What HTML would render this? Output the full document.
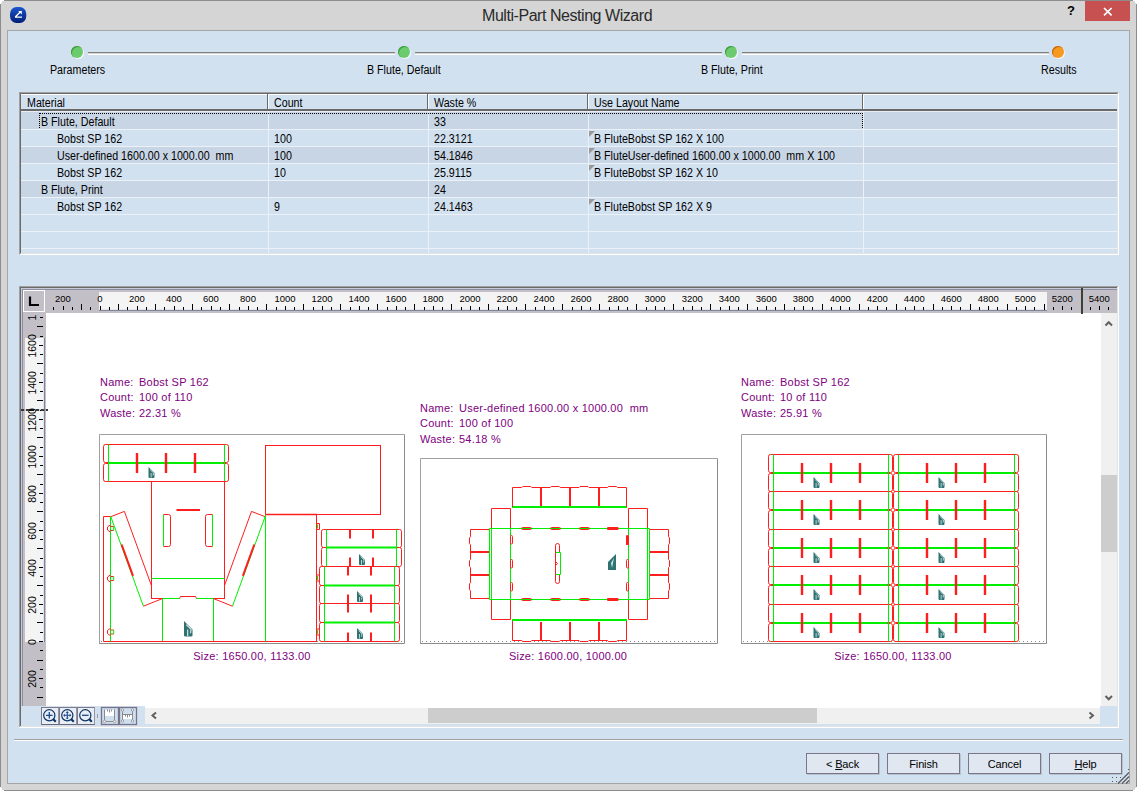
<!DOCTYPE html>
<html><head><meta charset="utf-8">
<style>
*{margin:0;padding:0;box-sizing:border-box}
html,body{width:1137px;height:791px;overflow:hidden;background:#d5d5d5;font-family:"Liberation Sans",sans-serif}
.a{position:absolute}
.t{position:absolute;white-space:pre;font-size:10.5px;line-height:12px;color:#000}
.tb{font-size:12px;transform:scaleX(.89);transform-origin:0 0}
#win{left:0;top:0;width:1137px;height:791px;border:1px solid #8c8c8c;background:#d5d5d5}
#content{left:7px;top:30px;width:1123px;height:754px;border:1px solid #a6a6a6;background:#d2e1f0}
.dot{position:absolute;width:12px;height:12px;border-radius:50%;background:#6ccb6c;box-shadow:1px 1px 0 #f4f8fc,inset 1px 1px 0 #3f9a3f}
.sl{position:absolute;height:3px;border-top:1px solid #808080;border-bottom:1px solid #fff;background:#d4d4d4;top:52px}
.btn{position:absolute;top:753px;width:73px;height:21px;border:1px solid #787688;background:#e1e7f1;box-shadow:1px 1px 0 #b9c3d0;font-size:11px;text-align:center;line-height:19px;padding-top:1px;letter-spacing:-0.15px}
</style></head><body>
<div id="win" class="a"></div>
<!-- title -->
<svg class="a" style="left:9px;top:6px" width="18" height="18" viewBox="0 0 18 18">
<defs><linearGradient id="ig" x1="0" y1="0" x2="0" y2="1"><stop offset="0" stop-color="#1d56cc"/><stop offset="1" stop-color="#001e78"/></linearGradient></defs>
<rect x="1" y="1" width="16.3" height="16" rx="6.5" ry="7" fill="url(#ig)"/>
<path d="M6.2,11 L11.5,5.8 M6,11.2 H13" stroke="#fff" stroke-width="1.3" fill="none"/>
<path d="M9.2,5 H12.8 V8.6Z" fill="#fff"/>
</svg>
<div class="t" style="left:482px;top:7px;font-size:16px;letter-spacing:-0.45px;line-height:18px;color:#2a2a2a">Multi-Part Nesting Wizard</div>
<div class="t" style="left:1067px;top:3px;font-size:13px;font-weight:bold;line-height:16px">?</div>
<div class="a" style="left:1085px;top:1px;width:45px;height:20px;background:#c75050"></div>
<svg class="a" style="left:1085px;top:1px" width="45" height="20"><path d="M19,7 L26.6,14.4 M26.6,7 L19,14.4" stroke="#fff" stroke-width="1.7"/></svg>

<div id="content" class="a"></div>

<!-- steps -->
<div class="sl" style="left:88px;width:307px"></div>
<div class="sl" style="left:415px;width:307px"></div>
<div class="sl" style="left:742px;width:307px"></div>
<div class="dot" style="left:71px;top:46px"></div>
<div class="dot" style="left:398px;top:46px"></div>
<div class="dot" style="left:725px;top:46px"></div>
<div class="dot" style="left:1052px;top:46px;background:#f7981f;box-shadow:1px 1px 0 #f4f8fc,inset 1px 1px 0 #c06a10"></div>
<div class="t tb" style="left:50px;top:64px">Parameters</div>
<div class="t tb" style="left:367px;top:64px">B Flute, Default</div>
<div class="t tb" style="left:701px;top:64px">B Flute, Print</div>
<div class="t tb" style="left:1041px;top:64px">Results</div>

<!-- TABLE -->
<div class="a" style="left:19px;top:92px;width:1100px;height:163px;background:#d2e1f0;border-top:1px solid #a0a0a0;border-left:1px solid #a0a0a0;border-right:1px solid #fff;border-bottom:1px solid #fff"></div>
<div class="a" style="left:20px;top:93px;width:1098px;height:161px;border-top:1px solid #696969;border-left:1px solid #696969;border-right:1px solid #e3e3e3;border-bottom:1px solid #e3e3e3"></div>
<div class="a" style="left:21px;top:94px;width:1096px;height:1px;background:#fff"></div>
<div class="a" style="left:21px;top:109px;width:1096px;height:2px;background:#696969"></div>
<div class="a" style="left:21px;top:111px;width:1096px;height:1px;background:#e8eef6"></div>
<div class="a" style="left:267px;top:94px;width:1px;height:15px;background:#696969"></div>
<div class="a" style="left:268px;top:95px;width:1px;height:14px;background:#fff"></div>
<div class="a" style="left:427px;top:94px;width:1px;height:15px;background:#696969"></div>
<div class="a" style="left:428px;top:95px;width:1px;height:14px;background:#fff"></div>
<div class="a" style="left:587px;top:94px;width:1px;height:15px;background:#696969"></div>
<div class="a" style="left:588px;top:95px;width:1px;height:14px;background:#fff"></div>
<div class="a" style="left:862px;top:94px;width:1px;height:15px;background:#696969"></div>
<div class="a" style="left:863px;top:95px;width:1px;height:14px;background:#fff"></div>
<div class="t tb" style="left:27px;top:97px">Material</div>
<div class="t tb" style="left:274px;top:97px">Count</div>
<div class="t tb" style="left:434px;top:97px">Waste %</div>
<div class="t tb" style="left:594px;top:97px">Use Layout Name</div>
<div class="a" style="left:21px;top:112px;width:1096px;height:17px;background:#c8d5e5"></div>
<div class="a" style="left:21px;top:129px;width:1096px;height:1px;background:#ecf1f7"></div>
<div class="a" style="left:21px;top:146px;width:1096px;height:1px;background:#ecf1f7"></div>
<div class="a" style="left:21px;top:147px;width:1096px;height:16px;background:#c8d5e5"></div>
<div class="a" style="left:21px;top:163px;width:1096px;height:1px;background:#ecf1f7"></div>
<div class="a" style="left:21px;top:180px;width:1096px;height:1px;background:#ecf1f7"></div>
<div class="a" style="left:21px;top:181px;width:1096px;height:16px;background:#c8d5e5"></div>
<div class="a" style="left:21px;top:197px;width:1096px;height:1px;background:#ecf1f7"></div>
<div class="a" style="left:21px;top:214px;width:1096px;height:1px;background:#ecf1f7"></div>
<div class="a" style="left:21px;top:231px;width:1096px;height:1px;background:#ecf1f7"></div>
<div class="a" style="left:21px;top:248px;width:1096px;height:1px;background:#ecf1f7"></div>
<div class="a" style="left:268px;top:111px;width:1px;height:142px;background:#ecf1f7"></div>
<div class="a" style="left:428px;top:111px;width:1px;height:142px;background:#ecf1f7"></div>
<div class="a" style="left:588px;top:111px;width:1px;height:142px;background:#ecf1f7"></div>
<div class="a" style="left:863px;top:111px;width:1px;height:142px;background:#ecf1f7"></div>
<div class="t tb" style="left:41px;top:116px">B Flute, Default</div>
<div class="t tb" style="left:434px;top:116px">33</div>
<div class="t tb" style="left:57px;top:133px">Bobst SP 162</div>
<div class="t tb" style="left:274px;top:133px">100</div>
<div class="t tb" style="left:434px;top:133px">22.3121</div>
<svg class="a" style="left:589px;top:131px" width="6" height="6"><path d="M0,0 L6,0 L0,6Z" fill="#999"/></svg>
<div class="t tb" style="left:594px;top:133px">B FluteBobst SP 162 X 100</div>
<div class="t tb" style="left:57px;top:150px">User-defined 1600.00 x 1000.00  mm</div>
<div class="t tb" style="left:274px;top:150px">100</div>
<div class="t tb" style="left:434px;top:150px">54.1846</div>
<svg class="a" style="left:589px;top:148px" width="6" height="6"><path d="M0,0 L6,0 L0,6Z" fill="#999"/></svg>
<div class="t tb" style="left:594px;top:150px">B FluteUser-defined 1600.00 x 1000.00  mm X 100</div>
<div class="t tb" style="left:57px;top:167px">Bobst SP 162</div>
<div class="t tb" style="left:274px;top:167px">10</div>
<div class="t tb" style="left:434px;top:167px">25.9115</div>
<svg class="a" style="left:589px;top:165px" width="6" height="6"><path d="M0,0 L6,0 L0,6Z" fill="#999"/></svg>
<div class="t tb" style="left:594px;top:167px">B FluteBobst SP 162 X 10</div>
<div class="t tb" style="left:41px;top:184px">B Flute, Print</div>
<div class="t tb" style="left:434px;top:184px">24</div>
<div class="t tb" style="left:57px;top:201px">Bobst SP 162</div>
<div class="t tb" style="left:274px;top:201px">9</div>
<div class="t tb" style="left:434px;top:201px">24.1463</div>
<svg class="a" style="left:589px;top:199px" width="6" height="6"><path d="M0,0 L6,0 L0,6Z" fill="#999"/></svg>
<div class="t tb" style="left:594px;top:201px">B FluteBobst SP 162 X 9</div>
<div class="a" style="left:39px;top:113px;width:824px;height:15px;border:1px dotted #000;border-bottom:none"></div>

<!-- CANVAS -->
<div class="a" style="left:19px;top:286px;width:1100px;height:442px;background:#d2e1f0;"></div>
<div class="a" style="left:19px;top:286px;width:1099px;height:1px;background:#a0a0a0;"></div>
<div class="a" style="left:19px;top:286px;width:1px;height:441px;background:#a0a0a0;"></div>
<div class="a" style="left:20px;top:287px;width:1097px;height:1px;background:#696969;"></div>
<div class="a" style="left:20px;top:287px;width:1px;height:439px;background:#696969;"></div>
<div class="a" style="left:1118px;top:286px;width:1px;height:442px;background:#fff;"></div>
<div class="a" style="left:19px;top:727px;width:1100px;height:1px;background:#fff;"></div>
<div class="a" style="left:1117px;top:287px;width:1px;height:440px;background:#e3e3e3;"></div>
<div class="a" style="left:20px;top:726px;width:1098px;height:1px;background:#e3e3e3;"></div>
<div class="a" style="left:21px;top:288px;width:1096px;height:1px;background:#c7cadb;"></div>
<div class="a" style="left:21px;top:289px;width:1096px;height:1px;background:#8e8ca0;"></div>
<div class="a" style="left:21px;top:288px;width:1px;height:418px;background:#c7cadb;"></div>
<div class="a" style="left:22px;top:289px;width:1px;height:417px;background:#8e8ca0;"></div>
<div class="a" style="left:23px;top:290px;width:1094px;height:23px;background:#c3bfc7;"></div>
<div class="a" style="left:23px;top:290px;width:23px;height:416px;background:#c3bfc7;"></div>
<div class="a" style="left:46px;top:313px;width:1055px;height:393px;background:#fff;"></div>
<svg class="a" style="left:0;top:0" width="1137" height="791"><path d="M99.5,643.5V434.5H404.5" stroke="#a0a0a0" fill="none"/>
<path d="M404.5,434.5V643.5H99" stroke="#8c8c8c" fill="none"/>
<line x1="101" y1="641.5" x2="404" y2="641.5" stroke="#8a8a8a" stroke-dasharray="1 3"/>
<rect x="103.5" y="444.5" width="125" height="18" rx="2" stroke="#ff1e1e" fill="none"/>
<rect x="103.5" y="463.5" width="125" height="18" rx="2" stroke="#ff1e1e" fill="none"/>
<line x1="108.5" y1="463" x2="223.5" y2="463" stroke="#00ee00" stroke-width="2"/>
<line x1="108.5" y1="444.5" x2="108.5" y2="481.5" stroke="#00ee00" stroke-width="1"/>
<line x1="224.5" y1="444.5" x2="224.5" y2="481.5" stroke="#00ee00" stroke-width="1"/>
<line x1="137" y1="453" x2="137" y2="473" stroke="#ff1e1e" stroke-width="2.4"/>
<line x1="166" y1="453" x2="166" y2="473" stroke="#ff1e1e" stroke-width="2.4"/>
<line x1="195" y1="453" x2="195" y2="473" stroke="#ff1e1e" stroke-width="2.4"/>
<polygon points="148.50,467.00 154.50,473.00 154.50,477.30 153.80,478.00 149.20,478.00 148.50,477.30" fill="#2e7272"/>
<path d="M150.10,469.60 L153.50,472.90 L153.10,475.60" stroke="#fff" stroke-width="0.80" fill="none" opacity=".85"/>
<rect x="150.70" y="473.00" width="0.80" height="4.60" fill="#fff" opacity=".85"/>
<line x1="151.5" y1="481" x2="151.5" y2="599" stroke="#ff1e1e" stroke-width="1"/>
<line x1="224.5" y1="481" x2="224.5" y2="599" stroke="#ff1e1e" stroke-width="1"/>
<line x1="151.5" y1="578.5" x2="224.5" y2="578.5" stroke="#00ee00" stroke-width="1"/>
<line x1="151" y1="598.5" x2="162.5" y2="598.5" stroke="#ff1e1e" stroke-width="1"/>
<line x1="213.5" y1="598.5" x2="225" y2="598.5" stroke="#ff1e1e" stroke-width="1"/>
<polyline points="162.5,598.5 179.5,598.5" stroke="#00ee00" stroke-width="1" fill="none"/>
<polyline points="196.5,598.5 213.5,598.5" stroke="#00ee00" stroke-width="1" fill="none"/>
<polyline points="179.5,598.5 180.5,596.5 195.5,596.5 196.5,598.5" stroke="#ff1e1e" stroke-width="1" fill="none"/>
<line x1="162.5" y1="598.5" x2="162.5" y2="641.5" stroke="#00ee00" stroke-width="1"/>
<line x1="213.5" y1="598.5" x2="213.5" y2="641.5" stroke="#00ee00" stroke-width="1"/>
<path d="M163.5,514.5 H168.5 Q170.5,514.5 170.5,516.5 V544.5 Q170.5,546.5 168.5,546.5 H163.5" stroke="#ff1e1e" fill="none"/>
<line x1="163.5" y1="514.5" x2="163.5" y2="546.5" stroke="#00ee00" stroke-width="1"/>
<path d="M212.5,514.5 H207.5 Q205.5,514.5 205.5,516.5 V544.5 Q205.5,546.5 207.5,546.5 H212.5" stroke="#ff1e1e" fill="none"/>
<line x1="212.5" y1="514.5" x2="212.5" y2="546.5" stroke="#00ee00" stroke-width="1"/>
<line x1="176.5" y1="510" x2="200" y2="510" stroke="#ff1e1e" stroke-width="2"/>
<polyline points="110.8,516.7 124.4,511.4 151.4,585.5" stroke="#ff1e1e" stroke-width="1" fill="none"/>
<line x1="110.8" y1="516.7" x2="143.4" y2="606.2" stroke="#00ee00" stroke-width="1"/>
<line x1="143.4" y1="606.2" x2="162.4" y2="598.6" stroke="#ff1e1e" stroke-width="1"/>
<line x1="121.6" y1="544.5" x2="133" y2="575.8" stroke="#ff1e1e" stroke-width="2"/>
<polyline points="265.1,516.7 251.5,511.4 224.5,585.5" stroke="#ff1e1e" stroke-width="1" fill="none"/>
<line x1="265.1" y1="516.7" x2="232.5" y2="606.2" stroke="#00ee00" stroke-width="1"/>
<line x1="232.5" y1="606.2" x2="213.5" y2="598.6" stroke="#ff1e1e" stroke-width="1"/>
<line x1="254.3" y1="544.5" x2="242.9" y2="575.8" stroke="#ff1e1e" stroke-width="2"/>
<polyline points="110.5,516.5 103.5,516.5 103.5,641.5 317,641.5" stroke="#ff1e1e" stroke-width="1" fill="none"/>
<line x1="110.5" y1="516.5" x2="110.5" y2="641.5" stroke="#00ee00" stroke-width="1"/>
<path d="M110.5,524.7 L107.5,527.0 V530.0 L110.5,532.3 M110.5,526.5 H113.7 M110.5,530.5 H113.7" stroke="#ff1e1e" fill="none"/>
<line x1="113.7" y1="526.5" x2="113.7" y2="530.5" stroke="#00ee00" stroke-width="1"/>
<path d="M110.5,574.7 L107.5,577.0 V580.0 L110.5,582.3 M110.5,576.5 H113.7 M110.5,580.5 H113.7" stroke="#ff1e1e" fill="none"/>
<line x1="113.7" y1="576.5" x2="113.7" y2="580.5" stroke="#00ee00" stroke-width="1"/>
<path d="M110.5,628.2 L107.5,630.5 V633.5 L110.5,635.8 M110.5,630 H113.7 M110.5,634 H113.7" stroke="#ff1e1e" fill="none"/>
<line x1="113.7" y1="630" x2="113.7" y2="634" stroke="#00ee00" stroke-width="1"/>
<rect x="265.5" y="445.5" width="115" height="69" stroke="#ff1e1e" fill="none"/>
<line x1="265.5" y1="514.5" x2="317" y2="514.5" stroke="#ff1e1e" stroke-width="1.5"/>
<line x1="265.5" y1="514.5" x2="265.5" y2="641.5" stroke="#00ee00" stroke-width="1"/>
<line x1="316.5" y1="514.5" x2="316.5" y2="641.5" stroke="#ff1e1e" stroke-width="1"/>
<path d="M316.5,523.5 H319.5 V529.5 H316.5" stroke="#ff1e1e" fill="none"/>
<line x1="317.5" y1="524.5" x2="317.5" y2="528.5" stroke="#00ee00" stroke-width="1"/>
<path d="M316.5,575 H319.5 V581 H316.5" stroke="#ff1e1e" fill="none"/>
<line x1="317.5" y1="576" x2="317.5" y2="580" stroke="#00ee00" stroke-width="1"/>
<path d="M316.5,629 H319.5 V635 H316.5" stroke="#ff1e1e" fill="none"/>
<line x1="317.5" y1="630" x2="317.5" y2="634" stroke="#00ee00" stroke-width="1"/>
<rect x="321.5" y="529.5" width="80.0" height="18.0" rx="2" stroke="#ff1e1e" fill="none"/>
<rect x="321.5" y="547.5" width="80.0" height="19.0" rx="2" stroke="#ff1e1e" fill="none"/>
<line x1="326.5" y1="547.5" x2="396.5" y2="547.5" stroke="#00ee00" stroke-width="2"/>
<line x1="326.5" y1="529.5" x2="326.5" y2="566.5" stroke="#00ee00" stroke-width="1"/>
<line x1="396.5" y1="529.5" x2="396.5" y2="566.5" stroke="#00ee00" stroke-width="1"/>
<line x1="350" y1="529.5" x2="350" y2="538.5" stroke="#ff1e1e" stroke-width="2"/>
<line x1="350" y1="557.5" x2="350" y2="566.5" stroke="#ff1e1e" stroke-width="2"/>
<line x1="373" y1="529.5" x2="373" y2="538.5" stroke="#ff1e1e" stroke-width="2"/>
<line x1="373" y1="557.5" x2="373" y2="566.5" stroke="#ff1e1e" stroke-width="2"/>
<polygon points="359.00,554.00 365.00,560.00 365.00,564.30 364.30,565.00 359.70,565.00 359.00,564.30" fill="#2e7272"/>
<path d="M360.60,556.60 L364.00,559.90 L363.60,562.60" stroke="#fff" stroke-width="0.80" fill="none" opacity=".85"/>
<rect x="361.20" y="560.00" width="0.80" height="4.60" fill="#fff" opacity=".85"/>
<rect x="319.5" y="566.5" width="80.0" height="19.0" rx="2" stroke="#ff1e1e" fill="none"/>
<rect x="319.5" y="585.5" width="80.0" height="18.0" rx="2" stroke="#ff1e1e" fill="none"/>
<line x1="324.5" y1="585.5" x2="394.5" y2="585.5" stroke="#00ee00" stroke-width="2"/>
<line x1="324.5" y1="566.5" x2="324.5" y2="603.5" stroke="#00ee00" stroke-width="1"/>
<line x1="394.5" y1="566.5" x2="394.5" y2="603.5" stroke="#00ee00" stroke-width="1"/>
<line x1="348" y1="566.5" x2="348" y2="575.5" stroke="#ff1e1e" stroke-width="2"/>
<line x1="348" y1="594.5" x2="348" y2="603.5" stroke="#ff1e1e" stroke-width="2"/>
<line x1="371" y1="566.5" x2="371" y2="575.5" stroke="#ff1e1e" stroke-width="2"/>
<line x1="371" y1="594.5" x2="371" y2="603.5" stroke="#ff1e1e" stroke-width="2"/>
<polygon points="357.00,591.00 363.00,597.00 363.00,601.30 362.30,602.00 357.70,602.00 357.00,601.30" fill="#2e7272"/>
<path d="M358.60,593.60 L362.00,596.90 L361.60,599.60" stroke="#fff" stroke-width="0.80" fill="none" opacity=".85"/>
<rect x="359.20" y="597.00" width="0.80" height="4.60" fill="#fff" opacity=".85"/>
<rect x="319.5" y="603.5" width="80.0" height="19.0" rx="2" stroke="#ff1e1e" fill="none"/>
<rect x="319.5" y="622.5" width="80.0" height="19.0" rx="2" stroke="#ff1e1e" fill="none"/>
<line x1="324.5" y1="622.5" x2="394.5" y2="622.5" stroke="#00ee00" stroke-width="2"/>
<line x1="324.5" y1="603.5" x2="324.5" y2="641.5" stroke="#00ee00" stroke-width="1"/>
<line x1="394.5" y1="603.5" x2="394.5" y2="641.5" stroke="#00ee00" stroke-width="1"/>
<line x1="348" y1="603.5" x2="348" y2="612.5" stroke="#ff1e1e" stroke-width="2"/>
<line x1="348" y1="632.5" x2="348" y2="641.5" stroke="#ff1e1e" stroke-width="2"/>
<line x1="371" y1="603.5" x2="371" y2="612.5" stroke="#ff1e1e" stroke-width="2"/>
<line x1="371" y1="632.5" x2="371" y2="641.5" stroke="#ff1e1e" stroke-width="2"/>
<polygon points="357.00,628.00 363.00,634.00 363.00,638.30 362.30,639.00 357.70,639.00 357.00,638.30" fill="#2e7272"/>
<path d="M358.60,630.60 L362.00,633.90 L361.60,636.60" stroke="#fff" stroke-width="0.80" fill="none" opacity=".85"/>
<rect x="359.20" y="634.00" width="0.80" height="4.60" fill="#fff" opacity=".85"/>
<polygon points="184.00,621.00 192.52,629.52 192.52,635.63 191.53,636.62 184.99,636.62 184.00,635.63" fill="#2e7272"/>
<path d="M186.27,624.69 L191.10,629.38 L190.53,633.21" stroke="#fff" stroke-width="1.14" fill="none" opacity=".85"/>
<rect x="187.12" y="629.52" width="1.14" height="6.53" fill="#fff" opacity=".85"/>
<path d="M420.5,643.5V458.5H717.5" stroke="#a0a0a0" fill="none"/>
<path d="M717.5,458.5V643.5H420" stroke="#8c8c8c" fill="none"/>
<line x1="422" y1="641.5" x2="717" y2="641.5" stroke="#8a8a8a" stroke-dasharray="1 3"/>
<path d="M489.5,528.5 H649.5 M489.5,599.5 H649.5" stroke="#00ee00" stroke-width="1" fill="none"/>
<path d="M489.5,528.5 V599.5 M491.5,528.5 V599.5 M510.5,528.5 V599.5 M628.5,528.5 V599.5 M647.5,528.5 V599.5 M649.5,528.5 V599.5" stroke="#00ee00" stroke-width="1" fill="none"/>
<path d="M510.5,528 V508.5 H491.5 V528" stroke="#ff1e1e" stroke-width="1" fill="none"/>
<path d="M628.5,528 V508.5 H647.5 V528" stroke="#ff1e1e" stroke-width="1" fill="none"/>
<path d="M510.5,600 V619.5 H491.5 V600" stroke="#ff1e1e" stroke-width="1" fill="none"/>
<path d="M628.5,600 V619.5 H647.5 V600" stroke="#ff1e1e" stroke-width="1" fill="none"/>
<line x1="512" y1="507" x2="627" y2="507" stroke="#00ee00" stroke-width="2"/>
<line x1="512" y1="620" x2="627" y2="620" stroke="#00ee00" stroke-width="2"/>
<path d="M512.5,507 V487.5 H521.75 L522.75,486.5 H530.75 L531.75,487.5 H550.25 L551.25,486.5 H559.25 L560.25,487.5 H579.0 L580.0,486.5 H588.0 L589.0,487.5 H607.5 L608.5,486.5 H616.5 L617.5,487.5 H626.5 V507" stroke="#ff1e1e" stroke-width="1" fill="none"/>
<path d="M512.5,621 V640.5 H521.75 L522.75,641.5 H530.75 L531.75,640.5 H550.25 L551.25,641.5 H559.25 L560.25,640.5 H579.0 L580.0,641.5 H588.0 L589.0,640.5 H607.5 L608.5,641.5 H616.5 L617.5,640.5 H626.5 V621" stroke="#ff1e1e" stroke-width="1" fill="none"/>
<line x1="541" y1="488" x2="541" y2="506" stroke="#ff1e1e" stroke-width="2"/>
<line x1="541" y1="622" x2="541" y2="640" stroke="#ff1e1e" stroke-width="2"/>
<line x1="570" y1="488" x2="570" y2="506" stroke="#ff1e1e" stroke-width="2"/>
<line x1="570" y1="622" x2="570" y2="640" stroke="#ff1e1e" stroke-width="2"/>
<line x1="599" y1="488" x2="599" y2="506" stroke="#ff1e1e" stroke-width="2"/>
<line x1="599" y1="622" x2="599" y2="640" stroke="#ff1e1e" stroke-width="2"/>
<path d="M489,529.5 H470.5 V536.75 L469.5,537.75 V543.75 L470.5,544.75 V559.5 L469.5,560.5 V566.5 L470.5,567.5 V582.75 L469.5,583.75 V589.75 L470.5,590.75 V598.5 H489" stroke="#ff1e1e" stroke-width="1" fill="none"/>
<path d="M650,529.5 H668.5 V536.75 L669.5,537.75 V543.75 L668.5,544.75 V559.5 L669.5,560.5 V566.5 L668.5,567.5 V582.75 L669.5,583.75 V589.75 L668.5,590.75 V598.5 H650" stroke="#ff1e1e" stroke-width="1" fill="none"/>
<line x1="471" y1="552" x2="489" y2="552" stroke="#ff1e1e" stroke-width="2"/>
<line x1="650" y1="552" x2="668" y2="552" stroke="#ff1e1e" stroke-width="2"/>
<line x1="471" y1="575" x2="489" y2="575" stroke="#ff1e1e" stroke-width="2"/>
<line x1="650" y1="575" x2="668" y2="575" stroke="#ff1e1e" stroke-width="2"/>
<rect x="521.5" y="527.5" width="10" height="2" rx="1" stroke="#ff1e1e" fill="none" stroke-width="1"/>
<rect x="521.5" y="598.5" width="10" height="2" rx="1" stroke="#ff1e1e" fill="none" stroke-width="1"/>
<rect x="550.5" y="527.5" width="10" height="2" rx="1" stroke="#ff1e1e" fill="none" stroke-width="1"/>
<rect x="550.5" y="598.5" width="10" height="2" rx="1" stroke="#ff1e1e" fill="none" stroke-width="1"/>
<rect x="579.5" y="527.5" width="10" height="2" rx="1" stroke="#ff1e1e" fill="none" stroke-width="1"/>
<rect x="579.5" y="598.5" width="10" height="2" rx="1" stroke="#ff1e1e" fill="none" stroke-width="1"/>
<rect x="607" y="527" width="11.5" height="3" rx="1" fill="#ff1e1e"/>
<rect x="607" y="598" width="11.5" height="3" rx="1" fill="#ff1e1e"/>
<rect x="510.5" y="535.5" width="2" height="8.5" rx="1" stroke="#ff1e1e" fill="none"/>
<rect x="626.5" y="535.5" width="2" height="8.5" rx="1" stroke="#ff1e1e" fill="none"/>
<rect x="510.5" y="559.5" width="2" height="8.5" rx="1" stroke="#ff1e1e" fill="none"/>
<rect x="626.5" y="559.5" width="2" height="8.5" rx="1" stroke="#ff1e1e" fill="none"/>
<rect x="510.5" y="582.5" width="2" height="8.5" rx="1" stroke="#ff1e1e" fill="none"/>
<rect x="626.5" y="582.5" width="2" height="8.5" rx="1" stroke="#ff1e1e" fill="none"/>
<rect x="626" y="535.5" width="3" height="9.5" fill="#ff1e1e"/>
<rect x="555.5" y="543.5" width="4" height="40" rx="2" stroke="#ff1e1e" fill="none"/>
<rect x="558.8" y="553" width="2" height="21" fill="#fff"/>
<path d="M556,552.5 H560.5 V574.5 H556" stroke="#00ee00" fill="none"/>
<path d="M555.5,561.5 L557.5,563.5 L555.5,565.5" stroke="#ff1e1e" fill="none"/>
<polygon points="616,554 616,570 608,570 608,562" fill="#2e7272"/>
<polygon points="614,558 611,563 612,568" fill="#fff" opacity=".8"/>
<path d="M741.5,643.5V434.5H1046.5" stroke="#a0a0a0" fill="none"/>
<path d="M1046.5,434.5V643.5H741" stroke="#8c8c8c" fill="none"/>
<line x1="743" y1="641.5" x2="1046" y2="641.5" stroke="#8a8a8a" stroke-dasharray="1 3"/>
<rect x="768.5" y="454.5" width="124" height="18" rx="2" stroke="#ff1e1e" fill="none"/>
<rect x="768.5" y="473.5" width="124" height="18" rx="2" stroke="#ff1e1e" fill="none"/>
<line x1="773.5" y1="473" x2="887.5" y2="473" stroke="#00ee00" stroke-width="2"/>
<line x1="773.5" y1="454.5" x2="773.5" y2="491.5" stroke="#00ee00" stroke-width="1"/>
<line x1="888.5" y1="454.5" x2="888.5" y2="491.5" stroke="#00ee00" stroke-width="1"/>
<line x1="802" y1="463" x2="802" y2="483" stroke="#ff1e1e" stroke-width="2.4"/>
<line x1="831" y1="463" x2="831" y2="483" stroke="#ff1e1e" stroke-width="2.4"/>
<line x1="860" y1="463" x2="860" y2="483" stroke="#ff1e1e" stroke-width="2.4"/>
<polygon points="813.50,477.00 819.50,483.00 819.50,487.30 818.80,488.00 814.20,488.00 813.50,487.30" fill="#2e7272"/>
<path d="M815.10,479.60 L818.50,482.90 L818.10,485.60" stroke="#fff" stroke-width="0.80" fill="none" opacity=".85"/>
<rect x="815.70" y="483.00" width="0.80" height="4.60" fill="#fff" opacity=".85"/>
<rect x="893.5" y="454.5" width="125" height="18" rx="2" stroke="#ff1e1e" fill="none"/>
<rect x="893.5" y="473.5" width="125" height="18" rx="2" stroke="#ff1e1e" fill="none"/>
<line x1="898.5" y1="473" x2="1013.5" y2="473" stroke="#00ee00" stroke-width="2"/>
<line x1="898.5" y1="454.5" x2="898.5" y2="491.5" stroke="#00ee00" stroke-width="1"/>
<line x1="1014.5" y1="454.5" x2="1014.5" y2="491.5" stroke="#00ee00" stroke-width="1"/>
<line x1="927" y1="463" x2="927" y2="483" stroke="#ff1e1e" stroke-width="2.4"/>
<line x1="956" y1="463" x2="956" y2="483" stroke="#ff1e1e" stroke-width="2.4"/>
<line x1="985" y1="463" x2="985" y2="483" stroke="#ff1e1e" stroke-width="2.4"/>
<polygon points="938.50,477.00 944.50,483.00 944.50,487.30 943.80,488.00 939.20,488.00 938.50,487.30" fill="#2e7272"/>
<path d="M940.10,479.60 L943.50,482.90 L943.10,485.60" stroke="#fff" stroke-width="0.80" fill="none" opacity=".85"/>
<rect x="940.70" y="483.00" width="0.80" height="4.60" fill="#fff" opacity=".85"/>
<rect x="768.5" y="491.5" width="124" height="18" rx="2" stroke="#ff1e1e" fill="none"/>
<rect x="768.5" y="510.5" width="124" height="19" rx="2" stroke="#ff1e1e" fill="none"/>
<line x1="773.5" y1="510" x2="887.5" y2="510" stroke="#00ee00" stroke-width="2"/>
<line x1="773.5" y1="491.5" x2="773.5" y2="529.5" stroke="#00ee00" stroke-width="1"/>
<line x1="888.5" y1="491.5" x2="888.5" y2="529.5" stroke="#00ee00" stroke-width="1"/>
<line x1="802" y1="500" x2="802" y2="520" stroke="#ff1e1e" stroke-width="2.4"/>
<line x1="831" y1="500" x2="831" y2="520" stroke="#ff1e1e" stroke-width="2.4"/>
<line x1="860" y1="500" x2="860" y2="520" stroke="#ff1e1e" stroke-width="2.4"/>
<polygon points="813.50,514.00 819.50,520.00 819.50,524.30 818.80,525.00 814.20,525.00 813.50,524.30" fill="#2e7272"/>
<path d="M815.10,516.60 L818.50,519.90 L818.10,522.60" stroke="#fff" stroke-width="0.80" fill="none" opacity=".85"/>
<rect x="815.70" y="520.00" width="0.80" height="4.60" fill="#fff" opacity=".85"/>
<rect x="893.5" y="491.5" width="125" height="18" rx="2" stroke="#ff1e1e" fill="none"/>
<rect x="893.5" y="510.5" width="125" height="19" rx="2" stroke="#ff1e1e" fill="none"/>
<line x1="898.5" y1="510" x2="1013.5" y2="510" stroke="#00ee00" stroke-width="2"/>
<line x1="898.5" y1="491.5" x2="898.5" y2="529.5" stroke="#00ee00" stroke-width="1"/>
<line x1="1014.5" y1="491.5" x2="1014.5" y2="529.5" stroke="#00ee00" stroke-width="1"/>
<line x1="927" y1="500" x2="927" y2="520" stroke="#ff1e1e" stroke-width="2.4"/>
<line x1="956" y1="500" x2="956" y2="520" stroke="#ff1e1e" stroke-width="2.4"/>
<line x1="985" y1="500" x2="985" y2="520" stroke="#ff1e1e" stroke-width="2.4"/>
<polygon points="938.50,514.00 944.50,520.00 944.50,524.30 943.80,525.00 939.20,525.00 938.50,524.30" fill="#2e7272"/>
<path d="M940.10,516.60 L943.50,519.90 L943.10,522.60" stroke="#fff" stroke-width="0.80" fill="none" opacity=".85"/>
<rect x="940.70" y="520.00" width="0.80" height="4.60" fill="#fff" opacity=".85"/>
<rect x="768.5" y="529.5" width="124" height="18" rx="2" stroke="#ff1e1e" fill="none"/>
<rect x="768.5" y="548.5" width="124" height="18" rx="2" stroke="#ff1e1e" fill="none"/>
<line x1="773.5" y1="548" x2="887.5" y2="548" stroke="#00ee00" stroke-width="2"/>
<line x1="773.5" y1="529.5" x2="773.5" y2="566.5" stroke="#00ee00" stroke-width="1"/>
<line x1="888.5" y1="529.5" x2="888.5" y2="566.5" stroke="#00ee00" stroke-width="1"/>
<line x1="802" y1="538" x2="802" y2="558" stroke="#ff1e1e" stroke-width="2.4"/>
<line x1="831" y1="538" x2="831" y2="558" stroke="#ff1e1e" stroke-width="2.4"/>
<line x1="860" y1="538" x2="860" y2="558" stroke="#ff1e1e" stroke-width="2.4"/>
<polygon points="813.50,552.00 819.50,558.00 819.50,562.30 818.80,563.00 814.20,563.00 813.50,562.30" fill="#2e7272"/>
<path d="M815.10,554.60 L818.50,557.90 L818.10,560.60" stroke="#fff" stroke-width="0.80" fill="none" opacity=".85"/>
<rect x="815.70" y="558.00" width="0.80" height="4.60" fill="#fff" opacity=".85"/>
<rect x="893.5" y="529.5" width="125" height="18" rx="2" stroke="#ff1e1e" fill="none"/>
<rect x="893.5" y="548.5" width="125" height="18" rx="2" stroke="#ff1e1e" fill="none"/>
<line x1="898.5" y1="548" x2="1013.5" y2="548" stroke="#00ee00" stroke-width="2"/>
<line x1="898.5" y1="529.5" x2="898.5" y2="566.5" stroke="#00ee00" stroke-width="1"/>
<line x1="1014.5" y1="529.5" x2="1014.5" y2="566.5" stroke="#00ee00" stroke-width="1"/>
<line x1="927" y1="538" x2="927" y2="558" stroke="#ff1e1e" stroke-width="2.4"/>
<line x1="956" y1="538" x2="956" y2="558" stroke="#ff1e1e" stroke-width="2.4"/>
<line x1="985" y1="538" x2="985" y2="558" stroke="#ff1e1e" stroke-width="2.4"/>
<polygon points="938.50,552.00 944.50,558.00 944.50,562.30 943.80,563.00 939.20,563.00 938.50,562.30" fill="#2e7272"/>
<path d="M940.10,554.60 L943.50,557.90 L943.10,560.60" stroke="#fff" stroke-width="0.80" fill="none" opacity=".85"/>
<rect x="940.70" y="558.00" width="0.80" height="4.60" fill="#fff" opacity=".85"/>
<rect x="768.5" y="566.5" width="124" height="18" rx="2" stroke="#ff1e1e" fill="none"/>
<rect x="768.5" y="585.5" width="124" height="19" rx="2" stroke="#ff1e1e" fill="none"/>
<line x1="773.5" y1="585" x2="887.5" y2="585" stroke="#00ee00" stroke-width="2"/>
<line x1="773.5" y1="566.5" x2="773.5" y2="604.5" stroke="#00ee00" stroke-width="1"/>
<line x1="888.5" y1="566.5" x2="888.5" y2="604.5" stroke="#00ee00" stroke-width="1"/>
<line x1="802" y1="575" x2="802" y2="595" stroke="#ff1e1e" stroke-width="2.4"/>
<line x1="831" y1="575" x2="831" y2="595" stroke="#ff1e1e" stroke-width="2.4"/>
<line x1="860" y1="575" x2="860" y2="595" stroke="#ff1e1e" stroke-width="2.4"/>
<polygon points="813.50,589.00 819.50,595.00 819.50,599.30 818.80,600.00 814.20,600.00 813.50,599.30" fill="#2e7272"/>
<path d="M815.10,591.60 L818.50,594.90 L818.10,597.60" stroke="#fff" stroke-width="0.80" fill="none" opacity=".85"/>
<rect x="815.70" y="595.00" width="0.80" height="4.60" fill="#fff" opacity=".85"/>
<rect x="893.5" y="566.5" width="125" height="18" rx="2" stroke="#ff1e1e" fill="none"/>
<rect x="893.5" y="585.5" width="125" height="19" rx="2" stroke="#ff1e1e" fill="none"/>
<line x1="898.5" y1="585" x2="1013.5" y2="585" stroke="#00ee00" stroke-width="2"/>
<line x1="898.5" y1="566.5" x2="898.5" y2="604.5" stroke="#00ee00" stroke-width="1"/>
<line x1="1014.5" y1="566.5" x2="1014.5" y2="604.5" stroke="#00ee00" stroke-width="1"/>
<line x1="927" y1="575" x2="927" y2="595" stroke="#ff1e1e" stroke-width="2.4"/>
<line x1="956" y1="575" x2="956" y2="595" stroke="#ff1e1e" stroke-width="2.4"/>
<line x1="985" y1="575" x2="985" y2="595" stroke="#ff1e1e" stroke-width="2.4"/>
<polygon points="938.50,589.00 944.50,595.00 944.50,599.30 943.80,600.00 939.20,600.00 938.50,599.30" fill="#2e7272"/>
<path d="M940.10,591.60 L943.50,594.90 L943.10,597.60" stroke="#fff" stroke-width="0.80" fill="none" opacity=".85"/>
<rect x="940.70" y="595.00" width="0.80" height="4.60" fill="#fff" opacity=".85"/>
<rect x="768.5" y="604.5" width="124" height="18" rx="2" stroke="#ff1e1e" fill="none"/>
<rect x="768.5" y="623.5" width="124" height="18" rx="2" stroke="#ff1e1e" fill="none"/>
<line x1="773.5" y1="623" x2="887.5" y2="623" stroke="#00ee00" stroke-width="2"/>
<line x1="773.5" y1="604.5" x2="773.5" y2="641.5" stroke="#00ee00" stroke-width="1"/>
<line x1="888.5" y1="604.5" x2="888.5" y2="641.5" stroke="#00ee00" stroke-width="1"/>
<line x1="802" y1="613" x2="802" y2="633" stroke="#ff1e1e" stroke-width="2.4"/>
<line x1="831" y1="613" x2="831" y2="633" stroke="#ff1e1e" stroke-width="2.4"/>
<line x1="860" y1="613" x2="860" y2="633" stroke="#ff1e1e" stroke-width="2.4"/>
<polygon points="813.50,627.00 819.50,633.00 819.50,637.30 818.80,638.00 814.20,638.00 813.50,637.30" fill="#2e7272"/>
<path d="M815.10,629.60 L818.50,632.90 L818.10,635.60" stroke="#fff" stroke-width="0.80" fill="none" opacity=".85"/>
<rect x="815.70" y="633.00" width="0.80" height="4.60" fill="#fff" opacity=".85"/>
<rect x="893.5" y="604.5" width="125" height="18" rx="2" stroke="#ff1e1e" fill="none"/>
<rect x="893.5" y="623.5" width="125" height="18" rx="2" stroke="#ff1e1e" fill="none"/>
<line x1="898.5" y1="623" x2="1013.5" y2="623" stroke="#00ee00" stroke-width="2"/>
<line x1="898.5" y1="604.5" x2="898.5" y2="641.5" stroke="#00ee00" stroke-width="1"/>
<line x1="1014.5" y1="604.5" x2="1014.5" y2="641.5" stroke="#00ee00" stroke-width="1"/>
<line x1="927" y1="613" x2="927" y2="633" stroke="#ff1e1e" stroke-width="2.4"/>
<line x1="956" y1="613" x2="956" y2="633" stroke="#ff1e1e" stroke-width="2.4"/>
<line x1="985" y1="613" x2="985" y2="633" stroke="#ff1e1e" stroke-width="2.4"/>
<polygon points="938.50,627.00 944.50,633.00 944.50,637.30 943.80,638.00 939.20,638.00 938.50,637.30" fill="#2e7272"/>
<path d="M940.10,629.60 L943.50,632.90 L943.10,635.60" stroke="#fff" stroke-width="0.80" fill="none" opacity=".85"/>
<rect x="940.70" y="633.00" width="0.80" height="4.60" fill="#fff" opacity=".85"/></svg>
<div class="t" style="left:100px;top:376px;color:#800080;font-size:11px;letter-spacing:0.23px">Name:</div>
<div class="t" style="left:100px;top:391px;color:#800080;font-size:11px;letter-spacing:0.23px">Count:</div>
<div class="t" style="left:100px;top:407px;color:#800080;font-size:11px;letter-spacing:0.23px">Waste:</div>
<div class="t" style="left:139px;top:376px;color:#800080;font-size:11px;letter-spacing:0.23px">Bobst SP 162</div>
<div class="t" style="left:139px;top:391px;color:#800080;font-size:11px;letter-spacing:0.23px">100 of 110</div>
<div class="t" style="left:139px;top:407px;color:#800080;font-size:11px;letter-spacing:0.23px">22.31 %</div>
<div class="t" style="left:420px;top:402px;color:#800080;font-size:11px;letter-spacing:0.23px">Name:</div>
<div class="t" style="left:420px;top:417px;color:#800080;font-size:11px;letter-spacing:0.23px">Count:</div>
<div class="t" style="left:420px;top:433px;color:#800080;font-size:11px;letter-spacing:0.23px">Waste:</div>
<div class="t" style="left:459px;top:402px;color:#800080;font-size:11px;letter-spacing:0.23px">User-defined 1600.00 x 1000.00  mm</div>
<div class="t" style="left:459px;top:417px;color:#800080;font-size:11px;letter-spacing:0.23px">100 of 100</div>
<div class="t" style="left:459px;top:433px;color:#800080;font-size:11px;letter-spacing:0.23px">54.18 %</div>
<div class="t" style="left:741px;top:376px;color:#800080;font-size:11px;letter-spacing:0.23px">Name:</div>
<div class="t" style="left:741px;top:391px;color:#800080;font-size:11px;letter-spacing:0.23px">Count:</div>
<div class="t" style="left:741px;top:407px;color:#800080;font-size:11px;letter-spacing:0.23px">Waste:</div>
<div class="t" style="left:780px;top:376px;color:#800080;font-size:11px;letter-spacing:0.23px">Bobst SP 162</div>
<div class="t" style="left:780px;top:391px;color:#800080;font-size:11px;letter-spacing:0.23px">10 of 110</div>
<div class="t" style="left:780px;top:407px;color:#800080;font-size:11px;letter-spacing:0.23px">25.91 %</div>
<div class="t" style="left:102px;top:650px;width:300px;text-align:center;color:#800080;font-size:11px;letter-spacing:0.23px">Size: 1650.00, 1133.00</div>
<div class="t" style="left:418px;top:650px;width:300px;text-align:center;color:#800080;font-size:11px;letter-spacing:0.23px">Size: 1600.00, 1000.00</div>
<div class="t" style="left:743px;top:650px;width:300px;text-align:center;color:#800080;font-size:11px;letter-spacing:0.23px">Size: 1650.00, 1133.00</div>
<div class="a" style="left:1101px;top:313px;width:16px;height:393px;background:#f0f0f0;"></div>
<div class="a" style="left:1101px;top:475px;width:16px;height:77px;background:#cdcdcd;"></div>
<div class="a" style="left:21px;top:706px;width:1096px;height:20px;background:#d2e1f0;"></div>
<div class="a" style="left:145px;top:706px;width:955px;height:2px;background:#fff;"></div>
<div class="a" style="left:145px;top:708px;width:955px;height:16px;background:#f0f0f0;"></div>
<div class="a" style="left:428px;top:708px;width:389px;height:15px;background:#cdcdcd;"></div>
<div class="a" style="left:41px;top:707px;width:18px;height:18px;border:1px solid #7d7a8c;border-right-color:#9894a6;border-bottom-color:#6a677a;background:#e9eef4"></div>
<div class="a" style="left:59px;top:707px;width:18px;height:18px;border:1px solid #7d7a8c;border-right-color:#9894a6;border-bottom-color:#6a677a;background:#e9eef4"></div>
<div class="a" style="left:77px;top:707px;width:18px;height:18px;border:1px solid #7d7a8c;border-right-color:#9894a6;border-bottom-color:#6a677a;background:#e9eef4"></div>
<svg class="a" style="left:0;top:0" width="1137" height="791"><circle cx="49.3" cy="715.3" r="5.6" stroke="#0c3468" stroke-width="1.2" fill="none"/><line x1="53.3" y1="719.3" x2="55.8" y2="721.8" stroke="#0c3468" stroke-width="2.2"/><path d="M46.0,715.3 H52.599999999999994 M49.3,712.0 V718.5999999999999" stroke="#1a4a8a" stroke-width="1.3"/><circle cx="67.3" cy="715.3" r="5.6" stroke="#0c3468" stroke-width="1.2" fill="none"/><line x1="71.3" y1="719.3" x2="73.8" y2="721.8" stroke="#0c3468" stroke-width="2.2"/><path d="M63.8,715.3 H70.8 M67.3,711.8 V718.8" stroke="#1a4a8a" stroke-width="1.1"/><path d="M63.3,715.3 l1.6,-1.6 v3.2z M71.3,715.3 l-1.6,-1.6 v3.2z M67.3,711.3 l-1.6,1.6 h3.2z M67.3,719.3 l-1.6,-1.6 h3.2z" fill="#1a4a8a"/><circle cx="85.3" cy="715.3" r="5.6" stroke="#0c3468" stroke-width="1.2" fill="none"/><line x1="89.3" y1="719.3" x2="91.8" y2="721.8" stroke="#0c3468" stroke-width="2.2"/><path d="M82.0,715.3 H88.6" stroke="#1a4a8a" stroke-width="1.3"/><line x1="97.5" y1="714" x2="97.5" y2="718" stroke="#9a9aa8"/><rect x="101.5" y="707.5" width="17" height="17" fill="#cfdff0" stroke="#77738a" stroke-width="1.3"/><rect x="119.5" y="707.5" width="17" height="17" fill="#cfdff0" stroke="#77738a" stroke-width="1.3"/><rect x="104" y="710" width="11" height="6" fill="#fff"/><path d="M104.5,709.5 V721.5 H114.5 V709.5 M107.5,709.5 v2 M109.5,709.5 v3 M111.5,709.5 v2" stroke="#8a8a8a" fill="none"/><circle cx="104.5" cy="721.5" r="1.2" fill="#fff" stroke="#8a8a8a" stroke-width=".8"/><circle cx="114.5" cy="721.5" r="1.2" fill="#fff" stroke="#8a8a8a" stroke-width=".8"/><rect x="123" y="714" width="10" height="5" fill="#fff"/><path d="M122.5,710 V721 M132.5,710 V721 M122.5,714.5 H132.5 M125.5,714.5 v2 M127.5,714.5 v3 M129.5,714.5 v2" stroke="#8a8a8a" fill="none"/><circle cx="122.5" cy="710" r="1.2" fill="#fff" stroke="#8a8a8a" stroke-width=".8"/><circle cx="132.5" cy="710" r="1.2" fill="#fff" stroke="#8a8a8a" stroke-width=".8"/><circle cx="122.5" cy="721" r="1.2" fill="#fff" stroke="#8a8a8a" stroke-width=".8"/><circle cx="132.5" cy="721" r="1.2" fill="#fff" stroke="#8a8a8a" stroke-width=".8"/><path d="M156,712.5 L152.5,715.5 L156,718.5" stroke="#606060" stroke-width="2" fill="none"/><path d="M1089.5,712.5 L1093,715.5 L1089.5,718.5" stroke="#606060" stroke-width="2" fill="none"/><path d="M1105.5,325.5 L1108.7,322.2 L1112,325.5" stroke="#606060" stroke-width="2" fill="none"/><path d="M1105.5,696 L1108.7,699.3 L1112,696" stroke="#606060" stroke-width="2" fill="none"/></svg>
<div class="a" style="left:99px;top:292px;width:948px;height:17px;background:#f4f4f4;"></div>
<div class="a" style="left:99px;top:309px;width:948px;height:1px;background:#dfe6f2;"></div>
<div class="a" style="left:99px;top:310px;width:948px;height:1px;background:#84849a;"></div>
<div class="a" style="left:25px;top:338px;width:18px;height:304px;background:#f4f4f4;"></div>
<div class="a" style="left:43px;top:338px;width:1px;height:304px;background:#dfe6f2;"></div>
<div class="a" style="left:44px;top:338px;width:1px;height:304px;background:#84849a;"></div>
<svg class="a" style="left:46px;top:290px" width="1071" height="23" viewBox="46 290 1071 23">
<path d="M53.5,307V310 M63.5,306V310 M72.5,307V310 M81.5,304V310 M90.5,307V310 M100.5,306V310 M109.5,307V310 M118.5,304V310 M127.5,307V310 M137.5,306V310 M146.5,307V310 M155.5,304V310 M164.5,307V310 M174.5,306V310 M183.5,307V310 M192.5,304V310 M201.5,307V310 M211.5,306V310 M220.5,307V310 M229.5,304V310 M239.5,307V310 M248.5,306V310 M257.5,307V310 M266.5,304V310 M276.5,307V310 M285.5,306V310 M294.5,307V310 M303.5,304V310 M313.5,307V310 M322.5,306V310 M331.5,307V310 M340.5,304V310 M350.5,307V310 M359.5,306V310 M368.5,307V310 M377.5,304V310 M387.5,307V310 M396.5,306V310 M405.5,307V310 M414.5,304V310 M424.5,307V310 M433.5,306V310 M442.5,307V310 M451.5,304V310 M461.5,307V310 M470.5,306V310 M479.5,307V310 M488.5,304V310 M498.5,307V310 M507.5,306V310 M516.5,307V310 M525.5,304V310 M535.5,307V310 M544.5,306V310 M553.5,307V310 M562.5,304V310 M572.5,307V310 M581.5,306V310 M590.5,307V310 M599.5,304V310 M609.5,307V310 M618.5,306V310 M627.5,307V310 M636.5,304V310 M646.5,307V310 M655.5,306V310 M664.5,307V310 M673.5,304V310 M683.5,307V310 M692.5,306V310 M701.5,307V310 M710.5,304V310 M720.5,307V310 M729.5,306V310 M738.5,307V310 M747.5,304V310 M757.5,307V310 M766.5,306V310 M775.5,307V310 M784.5,304V310 M794.5,307V310 M803.5,306V310 M812.5,307V310 M822.5,304V310 M831.5,307V310 M840.5,306V310 M849.5,307V310 M859.5,304V310 M868.5,307V310 M877.5,306V310 M886.5,307V310 M896.5,304V310 M905.5,307V310 M914.5,306V310 M923.5,307V310 M933.5,304V310 M942.5,307V310 M951.5,306V310 M960.5,307V310 M970.5,304V310 M979.5,307V310 M988.5,306V310 M997.5,307V310 M1007.5,304V310 M1016.5,307V310 M1025.5,306V310 M1034.5,307V310 M1044.5,304V310 M1053.5,307V310 M1062.5,306V310 M1071.5,307V310 M1081.5,304V310 M1090.5,307V310 M1099.5,306V310 M1108.5,307V310" stroke="#000" stroke-width="1"/>
<text x="62.9" y="302" font-size="9.5" text-anchor="middle" font-family="Liberation Sans">200</text>
<text x="99.9" y="302" font-size="9.5" text-anchor="middle" font-family="Liberation Sans">0</text>
<text x="136.9" y="302" font-size="9.5" text-anchor="middle" font-family="Liberation Sans">200</text>
<text x="173.9" y="302" font-size="9.5" text-anchor="middle" font-family="Liberation Sans">400</text>
<text x="210.9" y="302" font-size="9.5" text-anchor="middle" font-family="Liberation Sans">600</text>
<text x="248.0" y="302" font-size="9.5" text-anchor="middle" font-family="Liberation Sans">800</text>
<text x="285.0" y="302" font-size="9.5" text-anchor="middle" font-family="Liberation Sans">1000</text>
<text x="322.0" y="302" font-size="9.5" text-anchor="middle" font-family="Liberation Sans">1200</text>
<text x="359.0" y="302" font-size="9.5" text-anchor="middle" font-family="Liberation Sans">1400</text>
<text x="396.0" y="302" font-size="9.5" text-anchor="middle" font-family="Liberation Sans">1600</text>
<text x="433.0" y="302" font-size="9.5" text-anchor="middle" font-family="Liberation Sans">1800</text>
<text x="470.1" y="302" font-size="9.5" text-anchor="middle" font-family="Liberation Sans">2000</text>
<text x="507.1" y="302" font-size="9.5" text-anchor="middle" font-family="Liberation Sans">2200</text>
<text x="544.1" y="302" font-size="9.5" text-anchor="middle" font-family="Liberation Sans">2400</text>
<text x="581.1" y="302" font-size="9.5" text-anchor="middle" font-family="Liberation Sans">2600</text>
<text x="618.1" y="302" font-size="9.5" text-anchor="middle" font-family="Liberation Sans">2800</text>
<text x="655.1" y="302" font-size="9.5" text-anchor="middle" font-family="Liberation Sans">3000</text>
<text x="692.2" y="302" font-size="9.5" text-anchor="middle" font-family="Liberation Sans">3200</text>
<text x="729.2" y="302" font-size="9.5" text-anchor="middle" font-family="Liberation Sans">3400</text>
<text x="766.2" y="302" font-size="9.5" text-anchor="middle" font-family="Liberation Sans">3600</text>
<text x="803.2" y="302" font-size="9.5" text-anchor="middle" font-family="Liberation Sans">3800</text>
<text x="840.2" y="302" font-size="9.5" text-anchor="middle" font-family="Liberation Sans">4000</text>
<text x="877.2" y="302" font-size="9.5" text-anchor="middle" font-family="Liberation Sans">4200</text>
<text x="914.3" y="302" font-size="9.5" text-anchor="middle" font-family="Liberation Sans">4400</text>
<text x="951.3" y="302" font-size="9.5" text-anchor="middle" font-family="Liberation Sans">4600</text>
<text x="988.3" y="302" font-size="9.5" text-anchor="middle" font-family="Liberation Sans">4800</text>
<text x="1025.3" y="302" font-size="9.5" text-anchor="middle" font-family="Liberation Sans">5000</text>
<text x="1062.3" y="302" font-size="9.5" text-anchor="middle" font-family="Liberation Sans">5200</text>
<text x="1099.3" y="302" font-size="9.5" text-anchor="middle" font-family="Liberation Sans">5400</text>
</svg>
<svg class="a" style="left:23px;top:313px" width="22" height="393" viewBox="23 313 22 393">
<path d="M37,697.5H43 M40,687.5H43 M39,678.5H43 M40,669.5H43 M37,660.5H43 M40,650.5H43 M39,641.5H43 M40,632.5H43 M37,622.5H43 M40,613.5H43 M39,604.5H43 M40,595.5H43 M37,585.5H43 M40,576.5H43 M39,567.5H43 M40,558.5H43 M37,548.5H43 M40,539.5H43 M39,530.5H43 M40,521.5H43 M37,511.5H43 M40,502.5H43 M39,493.5H43 M40,484.5H43 M37,474.5H43 M40,465.5H43 M39,456.5H43 M40,447.5H43 M37,437.5H43 M40,428.5H43 M39,419.5H43 M40,410.5H43 M37,400.5H43 M40,391.5H43 M39,382.5H43 M40,373.5H43 M37,363.5H43 M40,354.5H43 M39,345.5H43 M40,336.5H43 M37,326.5H43 M40,317.5H43" stroke="#000" stroke-width="1"/>
<text transform="translate(36,716.0) rotate(-90)" x="0" y="0" font-size="10.5" text-anchor="middle" font-family="Liberation Sans">400</text>
<text transform="translate(36,679.0) rotate(-90)" x="0" y="0" font-size="10.5" text-anchor="middle" font-family="Liberation Sans">200</text>
<text transform="translate(36,642.0) rotate(-90)" x="0" y="0" font-size="10.5" text-anchor="middle" font-family="Liberation Sans">0</text>
<text transform="translate(36,605.0) rotate(-90)" x="0" y="0" font-size="10.5" text-anchor="middle" font-family="Liberation Sans">200</text>
<text transform="translate(36,568.0) rotate(-90)" x="0" y="0" font-size="10.5" text-anchor="middle" font-family="Liberation Sans">400</text>
<text transform="translate(36,531.0) rotate(-90)" x="0" y="0" font-size="10.5" text-anchor="middle" font-family="Liberation Sans">600</text>
<text transform="translate(36,493.9) rotate(-90)" x="0" y="0" font-size="10.5" text-anchor="middle" font-family="Liberation Sans">800</text>
<text transform="translate(36,456.9) rotate(-90)" x="0" y="0" font-size="10.5" text-anchor="middle" font-family="Liberation Sans">1000</text>
<text transform="translate(36,419.9) rotate(-90)" x="0" y="0" font-size="10.5" text-anchor="middle" font-family="Liberation Sans">1200</text>
<text transform="translate(36,382.9) rotate(-90)" x="0" y="0" font-size="10.5" text-anchor="middle" font-family="Liberation Sans">1400</text>
<text transform="translate(36,345.9) rotate(-90)" x="0" y="0" font-size="10.5" text-anchor="middle" font-family="Liberation Sans">1600</text>
<text transform="translate(36,320.5) rotate(-90)" x="0" y="0" font-size="10.5" text-anchor="start" font-family="Liberation Sans">1</text>
</svg>
<div class="a" style="left:23px;top:290px;width:22px;height:22px;border:1px solid #fff;background:#c3bfc7"></div>
<svg class="a" style="left:23px;top:290px" width="22" height="22"><path d="M7,6.5 V15 H16" stroke="#000" stroke-width="2.2" fill="none"/></svg>
<div class="a" style="left:1081px;top:288px;width:2px;height:26px;background:#3a4238;"></div>
<div class="a" style="left:21px;top:409px;width:27px;height:2px;background:repeating-linear-gradient(90deg,#3a3a3a 0 3px,rgba(0,0,0,.15) 3px 5px)"></div>
<div class="a" style="left:29px;top:409px;width:5px;height:2px;background:#111;"></div>

<!-- separator -->
<div class="a" style="left:14px;top:739px;width:1109px;height:2px;border-top:1px solid #a0a0a0;border-bottom:1px solid #fff"></div>
<div class="btn" style="left:806px">&lt; <u>B</u>ack</div>
<div class="btn" style="left:887px">Finish</div>
<div class="btn" style="left:968px">Cancel</div>
<div class="btn" style="left:1049px"><u>H</u>elp</div>
<svg class="a" style="left:1105px;top:765px" width="32" height="26">
<g fill="#595959"><rect x="7" y="12" width="1" height="1"/><rect x="11" y="12" width="1" height="1"/><rect x="15" y="12" width="1" height="1"/><rect x="7" y="16" width="1" height="1"/><rect x="11" y="16" width="1" height="1"/><rect x="23" y="4" width="1" height="1"/></g>
<path d="M13,18.5 L24,7.5 M17,18.5 L24,11.5 M21,18.5 L24,15.5" stroke="#595959" stroke-width="1.2"/>
</svg>
<div class="a" style="left:1133px;top:0;width:4px;height:1px;background:#fff"></div>
<div class="a" style="left:1135px;top:1px;width:2px;height:2px;background:#fff"></div>
<div class="a" style="left:1136px;top:3px;width:1px;height:1px;background:#fff"></div>
<div class="a" style="left:0;top:0;width:4px;height:1px;background:#fff"></div>
<div class="a" style="left:0;top:1px;width:2px;height:2px;background:#fff"></div>
<div class="a" style="left:0;top:3px;width:1px;height:1px;background:#fff"></div>
<div class="a" style="left:1133px;top:790px;width:4px;height:1px;background:#fff"></div>
<div class="a" style="left:1135px;top:788px;width:2px;height:2px;background:#fff"></div>
<div class="a" style="left:1136px;top:787px;width:1px;height:1px;background:#fff"></div>
<div class="a" style="left:0;top:790px;width:4px;height:1px;background:#fff"></div>
<div class="a" style="left:0;top:788px;width:2px;height:2px;background:#fff"></div>
<div class="a" style="left:0;top:787px;width:1px;height:1px;background:#fff"></div>
</body></html>
